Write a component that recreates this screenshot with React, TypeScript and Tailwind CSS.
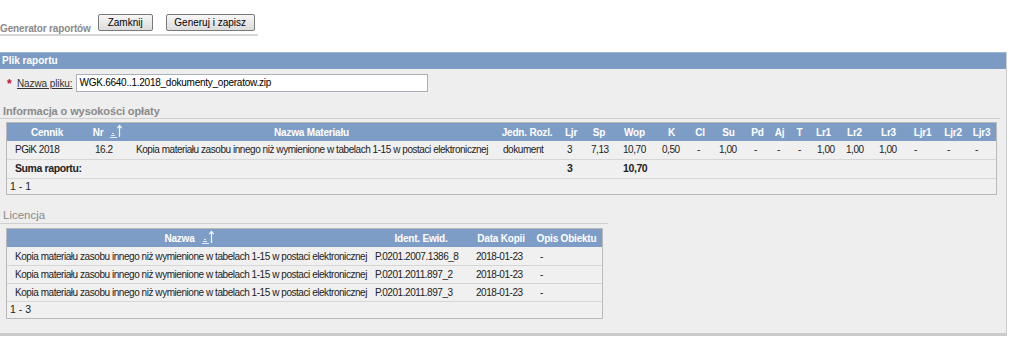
import React from 'react';

const font = "font-['Liberation_Sans',Arial,sans-serif]";

function SortIcon() {
  return (
    <svg width="13" height="14" viewBox="0 0 13 14" className="inline-block ml-[6px] -mt-[4px] align-middle">
      <path d="M1 13.5H8M2 11.5H6M3 9.5H5" stroke="#e4ecf6" strokeWidth="1" fill="none" />
      <path d="M10.5 13V1.5M8.3 4.2L10.5 1.5L12.7 4.2" stroke="#f2f6fb" strokeWidth="1.2" fill="none" />
    </svg>
  );
}

const matCols = [
  { name: 'Cennik', w: 'w-[80px]' },
  { name: 'Nr', w: 'w-[41px]', sort: true },
  { name: 'Nazwa Materiału', w: 'w-[367px]' },
  { name: 'Jedn. Rozl.', w: 'w-[64px]' },
  { name: 'Ljr', w: 'w-[24px]' },
  { name: 'Sp', w: 'w-[32px]' },
  { name: 'Wop', w: 'w-[39px]' },
  { name: 'K', w: 'w-[35px]' },
  { name: 'Cl', w: 'w-[22px]' },
  { name: 'Su', w: 'w-[35px]' },
  { name: 'Pd', w: 'w-[23px]' },
  { name: 'Aj', w: 'w-[21px]' },
  { name: 'T', w: 'w-[19px]' },
  { name: 'Lr1', w: 'w-[29px]' },
  { name: 'Lr2', w: 'w-[33px]' },
  { name: 'Lr3', w: 'w-[35px]' },
  { name: 'Ljr1', w: 'w-[33px]' },
  { name: 'Ljr2', w: 'w-[28px]' },
  { name: 'Ljr3', w: 'w-[29px]' },
];

const matRow = [
  'PGiK 2018', '16.2',
  'Kopia materiału zasobu innego niż wymienione w tabelach 1-15 w postaci elektronicznej',
  'dokument', '3', '7,13', '10,70', '0,50', '-', '1,00', '-', '-', '-', '1,00', '1,00', '1,00', '-', '-', '-',
];

const licRows = [
  ['Kopia materiału zasobu innego niż wymienione w tabelach 1-15 w postaci elektronicznej', 'P.0201.2007.1386_8', '2018-01-23', '-'],
  ['Kopia materiału zasobu innego niż wymienione w tabelach 1-15 w postaci elektronicznej', 'P.0201.2011.897_2', '2018-01-23', '-'],
  ['Kopia materiału zasobu innego niż wymienione w tabelach 1-15 w postaci elektronicznej', 'P.0201.2011.897_3', '2018-01-23', '-'],
];

const th = 'p-0 text-center text-[10px] font-bold tracking-[-0.2px] text-white whitespace-nowrap';
const td = 'p-0 text-[10px] tracking-[-0.45px] whitespace-nowrap';
const btn = 'mt-[14px] h-[17px] text-[10px] leading-[15px] text-black whitespace-nowrap border border-[#7a7a7a] rounded-[2px] bg-gradient-to-b from-[#f6f6f6] to-[#dcdcdc]';

export default function App() {
  return (
    <div className={`${font} w-[1024px] h-[352px] bg-white text-[#222] overflow-hidden`}>
      {/* Toolbar */}
      <div className="w-[258px] h-[36px] border-b-2 border-[#d6d6d6] flex">
        <span className="mt-[22px] text-[10px] leading-[14px] font-bold tracking-[-0.15px] text-[#8a8a8a] whitespace-nowrap">
          Generator raportów
        </span>
        <button className={`${btn} ml-[7px] w-[55px]`}>Zamknij</button>
        <button className={`${btn} ml-[13px] w-[89px]`}>Generuj i zapisz</button>
      </div>

      {/* Panel */}
      <div className="mt-[16px] w-[1007px] bg-[#eeeeee] border-r border-b-[3px] border-r-[#cfcfcf] border-b-[#cbcbcb] pb-[14px]">
        <div className="h-[17px] bg-[#7b9bc4] border-t border-[#9db6d6] pl-[2px] text-[10px] leading-[16px] font-bold text-white">
          Plik raportu
        </div>

        <div className="flex items-center h-[18px] mt-[5px]">
          <span className="ml-[7px] w-[10px] text-[#c8102e] font-bold text-[12px] leading-[12px] pt-[2px]">*</span>
          <span className="text-[10px] tracking-[-0.1px] underline text-[#333]">Nazwa pliku:</span>
          <div className="ml-[3px] w-[352px] h-[18px] bg-white border border-[#a9b0b8] pl-[3px] text-[10px] tracking-[-0.25px] leading-[16px] text-black">
            WGK.6640..1.2018_dokumenty_operatow.zip
          </div>
        </div>

        <div className="mt-[12px] mr-[6px] h-[15px] border-b border-[#cfcfcf] pl-[3px] text-[11px] tracking-[-0.1px] leading-[14px] font-bold text-[#8a8a8a]">
          Informacja o wysokości opłaty
        </div>

        {/* Materials table */}
        <div className="mt-[3px] ml-[6px] w-[991px] border border-[#b9b9b9] bg-[#f0f0f0]">
          <table className="w-full table-fixed border-collapse">
            <colgroup>
              {matCols.map(c => <col key={c.name} className={c.w} />)}
            </colgroup>
            <thead>
              <tr className="h-[18px] bg-[#7d9dc6]">
                {matCols.map(c => (
                  <th key={c.name} className={th}>
                    {c.name}{c.sort && <SortIcon />}
                  </th>
                ))}
              </tr>
            </thead>
            <tbody>
              <tr className="h-[18px] border-b border-[#d6d6d6]">
                {matRow.map((v, i) => (
                  <td key={i} className={`${td} pl-[8px]`}>{v}</td>
                ))}
              </tr>
              <tr className="h-[19px] border-b border-[#d6d6d6]">
                <td colSpan={4} className="p-0 pl-[8px] text-[10.5px] tracking-[-0.4px] font-bold">Suma raportu:</td>
                <td className="p-0 pl-[8px] text-[10.5px] tracking-[-0.4px] font-bold">3</td>
                <td></td>
                <td className="p-0 pl-[8px] text-[10.5px] tracking-[-0.4px] font-bold">10,70</td>
                <td colSpan={12}></td>
              </tr>
              <tr className="h-[16px]">
                <td colSpan={19} className="p-0 pl-[3px] text-[10.5px]">1 - 1</td>
              </tr>
            </tbody>
          </table>
        </div>

        <div className="mt-[13px] w-[608px] h-[16px] border-b border-[#cfcfcf] pl-[3px] text-[11.5px] leading-[14px] text-[#8a8a8a]">
          Licencja
        </div>

        {/* License table */}
        <div className="mt-[4px] ml-[6px] w-[597px] border border-[#b9b9b9] bg-[#f0f0f0]">
          <table className="w-full table-fixed border-collapse">
            <colgroup>
              <col className="w-[364px]" />
              <col className="w-[100px]" />
              <col className="w-[60px]" />
              <col className="w-[71px]" />
            </colgroup>
            <thead>
              <tr className="h-[18px] bg-[#7d9dc6]">
                <th className={th}>Nazwa<SortIcon /></th>
                <th className={th}>Ident. Ewid.</th>
                <th className={th}>Data Kopii</th>
                <th className={th}>Opis Obiektu</th>
              </tr>
            </thead>
            <tbody>
              {licRows.map((r, i) => (
                <tr key={i} className="h-[18px] border-b border-[#d6d6d6]">
                  <td className={`${td} pl-[8px]`}>{r[0]}</td>
                  <td className={`${td} pl-[4px]`}>{r[1]}</td>
                  <td className={`${td} pl-[5px]`}>{r[2]}</td>
                  <td className={`${td} pl-[9px]`}>{r[3]}</td>
                </tr>
              ))}
              <tr className="h-[16px]">
                <td colSpan={4} className="p-0 pl-[3px] text-[10.5px]">1 - 3</td>
              </tr>
            </tbody>
          </table>
        </div>
      </div>
    </div>
  );
}
